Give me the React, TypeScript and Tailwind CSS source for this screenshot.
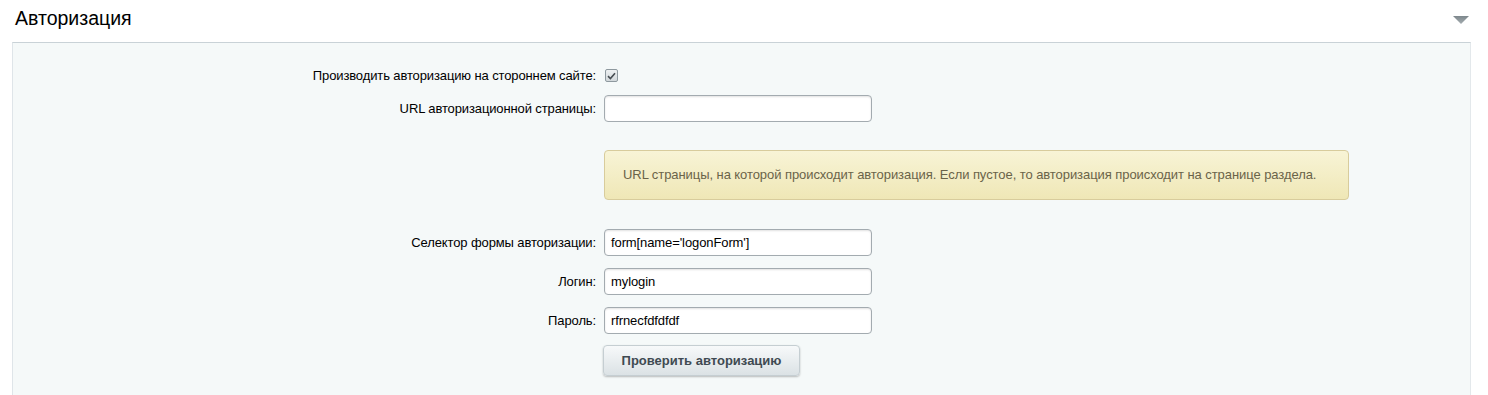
import React from "react";

const font = { fontFamily: '"Liberation Sans", Arial, sans-serif' };

function Row({ label, children, className = "" }: { label: string; children: React.ReactNode; className?: string }) {
  return (
    <div className={"flex items-center " + className}>
      <div className="w-[583px] shrink-0 text-right text-[13px] text-[#000] leading-none tracking-[-0.12px]">{label}</div>
      <div className="ml-[8px] flex items-center">{children}</div>
    </div>
  );
}

function TextInput({ value }: { value: string }) {
  return (
    <div className="w-[268px] h-[27px] rounded-[4px] border border-[#a3abb0] bg-white shadow-[inset_0_1px_2px_rgba(0,0,0,0.12)] flex items-center pl-[6px] text-[13px] text-[#000] tracking-[-0.1px]">
      {value}
    </div>
  );
}

export default function App() {
  return (
    <div className="w-[1488px] h-[395px] bg-white overflow-hidden" style={font}>
      <div className="flex items-center justify-between h-[42px] pb-[4px] pl-[15px] pr-[19px]">
        <div className="text-[19.5px] text-[#000]">Авторизация</div>
        <svg width="16" height="8" viewBox="0 0 16 8" className="mt-[1px]">
          <defs>
            <linearGradient id="tri" x1="0" y1="0" x2="0" y2="1">
              <stop offset="0" stopColor="#7d878c" />
              <stop offset="1" stopColor="#a5adb1" />
            </linearGradient>
          </defs>
          <polygon points="0,0 16,0 8,8" fill="url(#tri)" />
        </svg>
      </div>
      <div className="ml-[12px] w-[1459px] h-[353px] bg-[#f5f9f9] border-t border-t-[#c9d2d7] border-l border-l-[#dfe5e9] border-r border-r-[#e3e8eb] pt-[20px]">
        <Row label="Производить авторизацию на стороннем сайте:" className="h-[25px]">
          <div className="ml-[1px] w-[13px] h-[13px] rounded-[2px] border border-[#8e999f] bg-gradient-to-b from-[#eef1f2] to-[#d2d8db] flex items-center justify-center">
            <svg width="9" height="8" viewBox="0 0 9 8">
              <path d="M1 4.2 L3.4 6.5 L8 1.2" stroke="#464d52" strokeWidth="1.6" fill="none" />
            </svg>
          </div>
        </Row>
        <Row label="URL авторизационной страницы:" className="mt-[7px]">
          <TextInput value="" />
        </Row>
        <div className="mt-[28px] ml-[591px] w-[745px] h-[50px] rounded-[4px] border border-[#d8cc9c] bg-gradient-to-b from-[#f8f4d6] to-[#efe7b6] flex items-center pl-[18px] text-[13px] text-[#6a6349] tracking-[-0.07px]">
          URL страницы, на которой происходит авторизация. Если пустое, то авторизация происходит на странице раздела.
        </div>
        <Row label="Селектор формы авторизации:" className="mt-[29px]">
          <TextInput value="form[name='logonForm']" />
        </Row>
        <Row label="Логин:" className="mt-[12px]">
          <TextInput value="mylogin" />
        </Row>
        <Row label="Пароль:" className="mt-[12px]">
          <TextInput value="rfrnecfdfdfdf" />
        </Row>
        <div className="mt-[11px] ml-[590px]">
          <div className="w-[197px] h-[31px] rounded-[4px] border border-[#c5ced2] bg-gradient-to-b from-[#f7f9fa] to-[#dbe2e5] shadow-[0_1px_2px_rgba(0,0,0,0.25)] flex items-center justify-center text-[13px] font-bold text-[#3f4a52]">
            Проверить авторизацию
          </div>
        </div>
      </div>
    </div>
  );
}
